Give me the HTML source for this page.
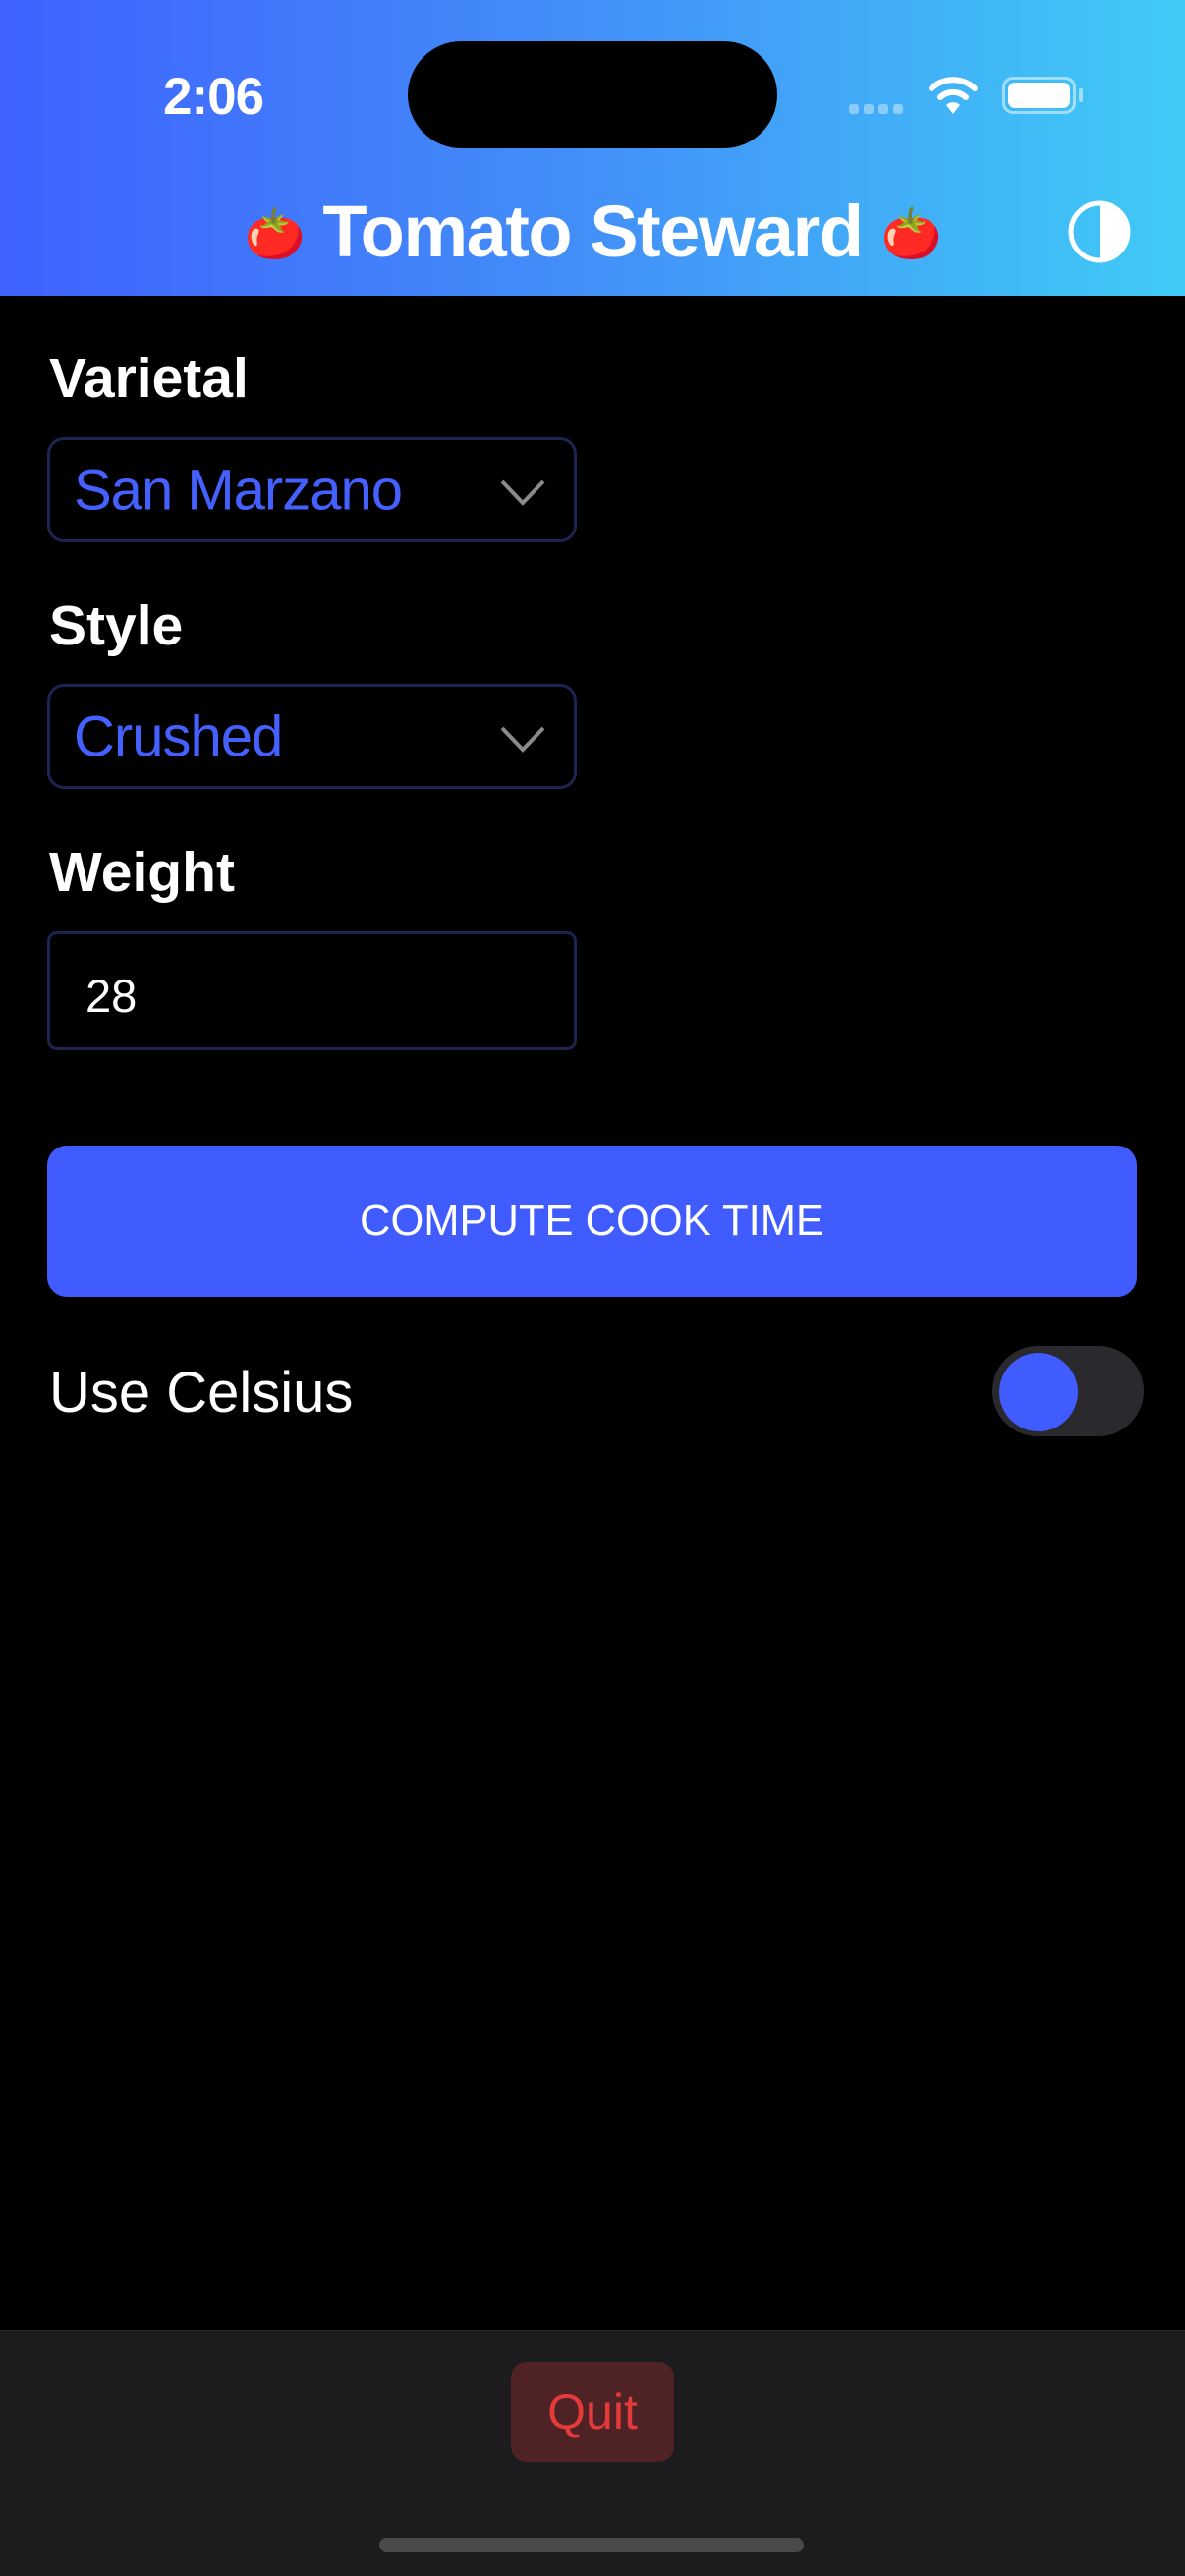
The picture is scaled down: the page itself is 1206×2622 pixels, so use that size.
<!DOCTYPE html>
<html><head><meta charset="utf-8"><style>
*{margin:0;padding:0;box-sizing:border-box}
body{width:1206px;height:2622px;background:#000;position:relative;overflow:hidden;font-family:"Liberation Sans",sans-serif;color:#fff}
.abs{position:absolute}
.hdr{left:0;top:0;width:1206px;height:301px;background:linear-gradient(90deg,#4062ff 0%,#4290f8 50%,#40cbf6 100%)}
.lbl{left:50px;font-size:57px;font-weight:bold;line-height:1}
.sel{left:48px;width:539px;height:107px;border:3px solid #1e2452;border-radius:17px}
.sel span{position:absolute;left:24px;top:50%;transform:translateY(-50%);font-size:58px;color:#4460ff;letter-spacing:-1px}
.sel svg{position:absolute;right:28px;top:38px}
.tom{font-size:50px;vertical-align:6px}
</style></head><body>
<div class="abs hdr"></div>
<div class="abs" style="left:166px;top:68px;font-size:53px;font-weight:bold;letter-spacing:-1px">2:06</div>
<div class="abs" style="left:415px;top:42px;width:376px;height:109px;background:#000;border-radius:55px"></div>
<svg class="abs" style="left:862px;top:104px" width="62" height="14"><g fill="#ffffff" opacity="0.4"><rect x="2" y="2" width="10" height="10" rx="3"/><rect x="17" y="2" width="10" height="10" rx="3"/><rect x="32" y="2" width="10" height="10" rx="3"/><rect x="47" y="2" width="10" height="10" rx="3"/></g></svg>
<svg class="abs" style="left:944px;top:76px" width="52" height="42" viewBox="0 0 52 42"><path d="M4 14 A32 32 0 0 1 48 14" stroke="#fff" stroke-width="6" fill="none" stroke-linecap="round"/><path d="M13 23 A19 19 0 0 1 39 23" stroke="#fff" stroke-width="6" fill="none" stroke-linecap="round"/><path d="M19 31 L26 40 L33 31 A10 10 0 0 0 19 31Z" fill="#fff"/></svg>
<div class="abs" style="left:1020px;top:78px;width:75px;height:38px;border:3px solid rgba(255,255,255,0.5);border-radius:11px"></div>
<div class="abs" style="left:1026px;top:84px;width:63px;height:26px;background:#fff;border-radius:7px"></div>
<div class="abs" style="left:1098px;top:90px;width:4px;height:14px;background:rgba(255,255,255,0.5);border-radius:2px"></div>
<div class="abs" style="left:0;top:196px;width:1206px;text-align:center;font-size:74px;font-weight:bold;letter-spacing:-1.5px;line-height:80px"><span class="tom">🍅</span> Tomato Steward <span class="tom">🍅</span></div>
<svg class="abs" style="left:1085px;top:202px" width="68" height="68" viewBox="0 0 68 68"><circle cx="34" cy="34" r="29" fill="none" stroke="#fff" stroke-width="5"/><path d="M34 5 A29 29 0 0 1 34 63Z" fill="#fff"/></svg>

<div class="abs lbl" style="top:357px">Varietal</div>
<div class="abs sel" style="top:445px"><span>San Marzano</span><svg width="48" height="30"><path d="M3 4 L24 26 L45 4" stroke="#8a8a8e" stroke-width="4" fill="none"/></svg></div>
<div class="abs lbl" style="top:609px">Style</div>
<div class="abs sel" style="top:696px"><span>Crushed</span><svg width="48" height="30"><path d="M3 4 L24 26 L45 4" stroke="#8a8a8e" stroke-width="4" fill="none"/></svg></div>
<div class="abs lbl" style="top:860px">Weight</div>
<div class="abs" style="left:48px;top:948px;width:539px;height:121px;border:3px solid #1e2452;border-radius:10px"><span style="position:absolute;left:36px;top:35px;font-size:47px">28</span></div>

<div class="abs" style="left:48px;top:1166px;width:1109px;height:154px;background:#405cff;border-radius:20px;text-align:center;line-height:154px;font-size:43.5px">COMPUTE COOK TIME</div>

<div class="abs" style="left:50px;top:1384px;font-size:58px">Use Celsius</div>
<div class="abs" style="left:1010px;top:1370px;width:154px;height:92px;background:#2a2a2e;border-radius:46px"></div>
<div class="abs" style="left:1017px;top:1377px;width:80px;height:80px;background:#405cff;border-radius:50%"></div>

<div class="abs" style="left:0;top:2372px;width:1206px;height:250px;background:#1c1c1e;border-top:1px solid #2a2a2c"></div>
<div class="abs" style="left:520px;top:2404px;width:166px;height:102px;background:#4f2325;border-radius:16px;text-align:center;line-height:102px;font-size:50px;color:#e53a3a">Quit</div>
<div class="abs" style="left:386px;top:2583px;width:432px;height:15px;background:#4a4a4a;border-radius:8px"></div>
</body></html>
